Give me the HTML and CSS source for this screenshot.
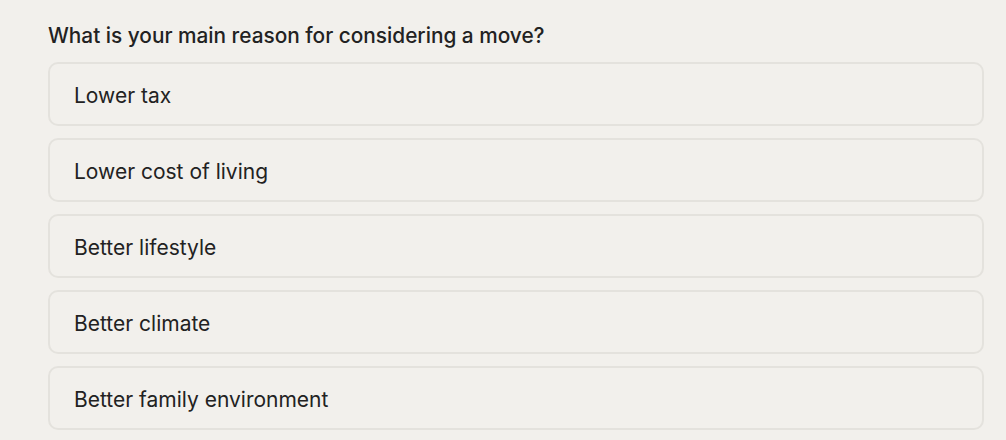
FILE: index.html
```html
<!DOCTYPE html>
<html lang="en">
<head>
  <meta charset="UTF-8" />
  <meta name="viewport" content="width=device-width, initial-scale=1.0" />
  <title>Move reason</title>
  <link rel="stylesheet" href="styles.css">
</head>
<body>
  <div class="question">
    <h2>What is your main reason for considering a move?</h2>
    <div class="options">
      <button class="option">Lower tax</button>
      <button class="option">Lower cost of living</button>
      <button class="option">Better lifestyle</button>
      <button class="option">Better climate</button>
      <button class="option">Better family environment</button>
    </div>
  </div>
</body>
</html>
```

FILE: styles.css
```css
body {
  margin: 0;
  font-family: Inter, "Noto Sans", sans-serif;
  background: #f2f0ec;
  color: #222;
}

.question {
  padding: 22px 22px 0 48px;
}

.question h2 {
  margin: 0 0 12px;
  font-size: 20.8px;
  font-weight: 500;
  line-height: 28px;
  letter-spacing: 0;
}

.options {
  display: flex;
  flex-direction: column;
  gap: 12px;
}

.option {
  height: 64px;
  padding: 2px 24px 0;
  text-align: left;
  font-family: inherit;
  font-size: 21px;
  font-weight: 400;
  color: #222;
  background: #f2f0ec;
  border: 2px solid #e4e2dd;
  border-radius: 10px;
}
```
